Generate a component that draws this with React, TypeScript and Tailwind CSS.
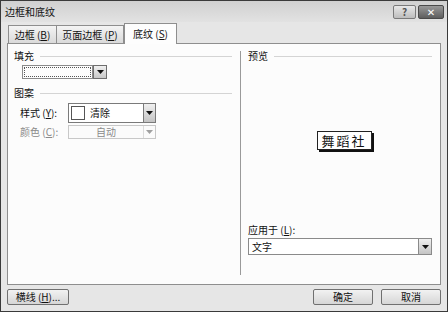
const font = { fontFamily: '"Noto Sans CJK SC", "DejaVu Sans", sans-serif' };

function Arrow({ disabled = false }: { disabled?: boolean }) {
  return (
    <svg width="7" height="4" viewBox="0 0 7 4">
      <path d="M0 0h7L3.5 4z" fill={disabled ? "#a0a0a0" : "#111"} />
    </svg>
  );
}

function Legend({ text }: { text: string }) {
  return (
    <div className="flex items-center gap-[6px] h-[12px]">
      <span className="text-[10px] leading-none text-[#111]">{text}</span>
      <div className="flex-1 h-px bg-[#d4d4d4]" />
    </div>
  );
}

function Btn({ children, w }: { children: React.ReactNode; w: string }) {
  return (
    <div
      className={`${w} h-[16px] border border-[#707070] rounded-[2px] bg-gradient-to-b from-[#f2f2f2] to-[#d6d6d6] flex items-center justify-center text-[10px] leading-none text-[#111]`}
    >
      {children}
    </div>
  );
}

export default function App() {
  return (
    <div style={font} className="w-[448px] h-[312px] bg-[#e6e6e6] border border-[#3a3a3a] flex flex-col overflow-hidden">
      {/* title bar */}
      <div className="h-[21px] flex items-center justify-between pl-[4px] pr-[3px] bg-gradient-to-b from-[#d0d0d0] to-[#e2e2e2]">
        <span className="text-[10px] leading-none text-[#111]">边框和底纹</span>
        <div className="flex gap-[2px] items-center">
          <div className="w-[23px] h-[14px] border border-[#7a7a7a] rounded-[2px] bg-gradient-to-b from-[#e8e8e8] to-[#bdbdbd] flex items-center justify-center text-[10px] leading-none text-[#555] font-bold">?</div>
          <div className="w-[26px] h-[14px] border border-[#4a4a4a] rounded-[2px] bg-gradient-to-b from-[#9a9a9a] to-[#5e5e5e] flex items-center justify-center text-[10px] leading-none text-white font-bold">✕</div>
        </div>
      </div>

      <div className="flex-1 flex flex-col px-[6px]">
        {/* tabs */}
        <div className="flex items-end h-[21px] pl-[1px]">
          <div className="h-[18px] w-[49px] border border-b-0 border-[#8e8e8e] bg-gradient-to-b from-[#f4f4f4] to-[#dadada] flex items-center justify-center text-[10px] leading-none text-[#111]">
            边框 (<u>B</u>)
          </div>
          <div className="h-[18px] w-[67px] border border-b-0 border-l-0 border-[#8e8e8e] bg-gradient-to-b from-[#f4f4f4] to-[#dadada] flex items-center justify-center text-[10px] leading-none text-[#111]">
            页面边框 (<u>P</u>)
          </div>
          <div className="h-[21px] w-[53px] -mb-px relative z-10 border border-b-0 border-[#8e8e8e] bg-[#fdfdfd] flex items-center justify-center text-[10px] leading-none text-[#111]">
            底纹 (<u>S</u>)
          </div>
        </div>

        {/* panel */}
        <div className="h-[242px] border border-[#8e8e8e] bg-[#fcfcfc] flex">
          {/* left */}
          <div className="w-[232px] flex flex-col pl-[6px] pr-[8px] pt-[6px]">
            <Legend text="填充" />
            <div className="mt-[3px] ml-[8px] flex h-[14px]">
              <div className="w-[71px] h-full border border-[#8a8a8a] p-px">
                <div className="w-full h-full border border-dotted border-[#555]" />
              </div>
              <div className="w-[14px] h-full border border-[#6e6e6e] bg-gradient-to-b from-[#f0f0f0] to-[#c8c8c8] flex items-center justify-center">
                <Arrow />
              </div>
            </div>
            <div className="mt-[8px]">
              <Legend text="图案" />
            </div>
            <div className="mt-[4px] ml-[6px] flex items-center">
              <span className="w-[48px] text-[10px] leading-none text-[#111]">
                样式 (<u>Y</u>):
              </span>
              <div className="w-[88px] h-[20px] border border-[#7a7a7a] bg-white flex items-center">
                <div className="ml-[2px] w-[14px] h-[14px] border border-[#555]" />
                <span className="ml-[5px] text-[10px] leading-none text-[#111]">清除</span>
                <div className="ml-auto w-[12px] h-full border-l border-[#7a7a7a] bg-gradient-to-b from-[#f0f0f0] to-[#c4c4c4] flex items-center justify-center">
                  <Arrow />
                </div>
              </div>
            </div>
            <div className="mt-[2px] ml-[6px] flex items-center">
              <span className="w-[48px] text-[10px] leading-none text-[#8a8a8a]">
                颜色 (<u>C</u>):
              </span>
              <div className="w-[88px] h-[14px] border border-[#c8c8c8] bg-[#fbfbfb] flex items-center">
                <span className="flex-1 text-center text-[10px] leading-none text-[#8a8a8a]">自动</span>
                <div className="w-[12px] h-full border-l border-[#dcdcdc] flex items-center justify-center">
                  <Arrow disabled />
                </div>
              </div>
            </div>
          </div>

          {/* right */}
          <div className="flex-1 flex flex-col">
            <div className="flex-1 border-l border-[#9a9a9a] mt-[7px] mb-[9px] flex flex-col pl-[7px] pr-[8px]">
              <div className="-mt-px">
                <Legend text="预览" />
              </div>
              <div className="flex-1 flex justify-center">
                <div className="relative ml-[8px] mt-[69px] self-start">
                  <div className="absolute left-[2px] top-[2px] w-full h-full bg-[#111]" />
                  <div className="relative w-[55px] h-[19px] border border-[#222] bg-white flex items-center justify-center text-[13px] leading-none tracking-[2px] text-[#111]">
                    舞蹈社
                  </div>
                </div>
              </div>
              <span className="text-[10px] leading-none text-[#111]">
                应用于 (<u>L</u>):
              </span>
              <div className="mt-[3px] mb-[20px] h-[17px] border border-[#8a8a8a] bg-white flex items-center">
                <span className="ml-[3px] text-[10px] leading-none text-[#111]">文字</span>
                <div className="ml-auto w-[13px] h-full border-l border-[#8a8a8a] bg-gradient-to-b from-[#f0f0f0] to-[#c4c4c4] flex items-center justify-center">
                  <Arrow />
                </div>
              </div>
            </div>
          </div>
        </div>

        {/* bottom buttons */}
        <div className="flex items-center mt-[4px]">
          <Btn w="w-[62px]">
            横线 (<u>H</u>)...
          </Btn>
          <div className="ml-auto flex gap-[8px]">
            <Btn w="w-[60px]">确定</Btn>
            <Btn w="w-[60px]">取消</Btn>
          </div>
        </div>
      </div>
    </div>
  );
}
